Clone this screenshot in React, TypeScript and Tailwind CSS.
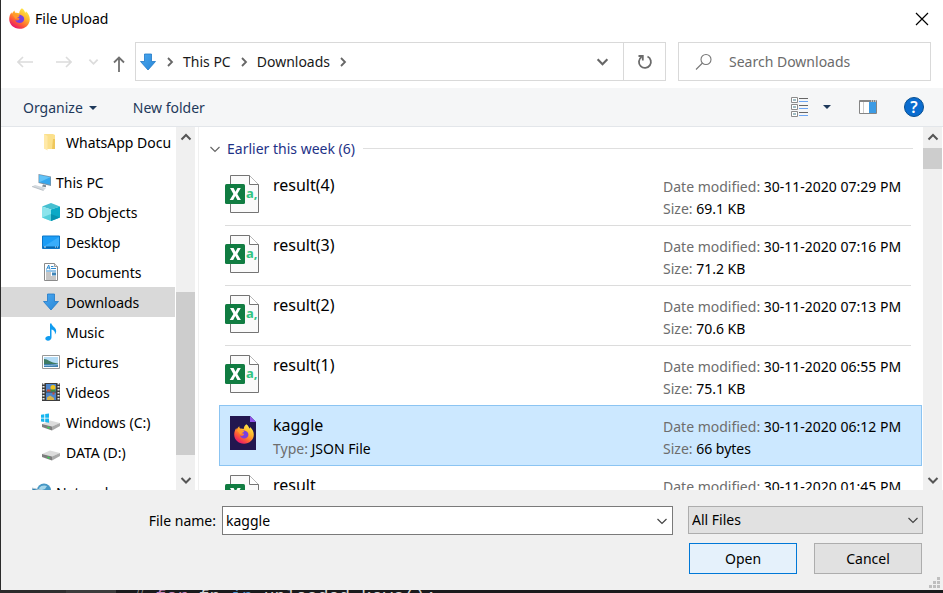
import React from "react";

const DownArrow = () => (
  <svg viewBox="0 0 18 18" className="size-[18px] shrink-0" aria-hidden="true">
    <defs>
      <linearGradient id="dl" x1="0" y1="0" x2="1" y2="1">
        <stop offset="0" stopColor="#4aa8f0" />
        <stop offset="1" stopColor="#2886d6" />
      </linearGradient>
    </defs>
    <path d="M5.5 1h7v7.5h4L9 17 1.500 8.500h4z" fill="url(#dl)" stroke="#1f78c8" strokeWidth="0.8" />
  </svg>
);

const Firefox = ({ className }: { className: string }) => (
  <svg viewBox="0 0 20 20" className={className} aria-hidden="true">
    <defs>
      <linearGradient id="ff" x1="0.85" y1="0.05" x2="0.25" y2="0.95">
        <stop offset="0" stopColor="#fff04a" />
        <stop offset="0.4" stopColor="#ffb02a" />
        <stop offset="0.7" stopColor="#ff5f35" />
        <stop offset="1" stopColor="#e8156c" />
      </linearGradient>
    </defs>
    <path d="M12.300 0.300c2 1.400 2.700 2.900 3 4.200.7-.3.800-1 .800-1.500 2.400 2 3.700 4.800 3.700 7.600 0 5.200-4.300 9.200-9.800 9.200S.2 15.700.2 10.500c0-2.500.9-4.900 2.200-6.500 0 .7.200 1.200.5 1.500C3.300 4.300 4.200 3 5.300 2.300c-.1.900.2 1.600.7 2.200 1.800-.2 2.800.1 3.700.600C9.800 3.200 10.800 1.400 12.300.3z" fill="url(#ff)" />
    <path d="M6.200 8.600c1.200-1.700 3.200-2.500 5-1.900 2.300.6 3.500 2.400 3.200 4.300-.3 2.100-2.100 3.400-4.200 3.400-2 0-3.800-1.100-4.200-2.900 1.300.7 2.700.5 3.600-.5.800-.8.300-1.400-.6-1.500z" fill="#7a3fe0" />
    <path d="M3 6.200c1.300-.9 3.200-.8 4.500.1 1 .6 1.900.6 2.700.8-.2 1-1.200 1.500-2.100 1.900-.7.400-.5 1.300-1.700 1.500z" fill="#ff9a2b" />
  </svg>
);

type ChevronProps = { dir: "up" | "down" | "right"; className: string; weight?: number };
const chevronPaths = { up: "M1.500 7.500 6 3l4.500 4.500", down: "M1.500 4 6 8.500 10.500 4", right: "M4 2l4 4-4 4" };
const Chevron = ({ dir, className, weight = 1.5 }: ChevronProps) => (
  <svg viewBox="0 0 12 12" className={className} fill="none" stroke="currentColor" strokeWidth={weight} aria-hidden="true">
    <path d={chevronPaths[dir]} />
  </svg>
);

const Folder = () => (
  <svg viewBox="0 0 18 18" className="size-[18px]" aria-hidden="true">
    <path d="M2 1h9l2 1v14H3l-1-1z" fill="#fbe08c" />
    <path d="M11 6h2v10h-3z" fill="#efc75c" />
    <path d="M2 1l3.500 2v14.500L2 15.500z" fill="#ffe9a8" />
  </svg>
);
const Computer = () => (
  <svg viewBox="0 0 20 18" className="h-[18px] w-5" aria-hidden="true">
    <path d="M6.500 1 19 3.500V13L6.500 10z" fill="#7d93a5" />
    <path d="M7.300 2l11 2.200v7.600l-11-2.500z" fill="#35a7ee" />
    <path d="M7.300 2l11 2.200-11 5z" fill="#62c3f7" />
    <path d="M11 11.500l3 .7v2l-4-.7z" fill="#7d8b96" />
    <path d="M0 13.500l3-1.500 11 3-2.500 2.500z" fill="#d3d9de" />
    <path d="M0 13.500 11.500 17.500" stroke="#a6afb6" strokeWidth="0.7" />
  </svg>
);
const Cube = () => (
  <svg viewBox="0 0 18 18" className="size-[18px]" aria-hidden="true">
    <path d="M9 0l9 3.500L9 6.500 0 3.500z" fill="#46bfd0" />
    <path d="M0 3.500l9 3V18l-9-3.500z" fill="#8be4ec" />
    <path d="M18 3.500l-9 3V18l9-3.500z" fill="#0aa9c6" />
    <path d="M0 14.500 9 11v7z" fill="#55cfdb" />
    <path d="M18 14.500 9 11v7z" fill="#0692af" />
  </svg>
);
const Desktop = () => (
  <svg viewBox="0 0 18 18" className="size-[18px]" aria-hidden="true">
    <path d="M.5 3h17v12.500H.5z" fill="#1c9df5" stroke="#0b77c9" />
    <path d="M1 14 17 4v9.500H1z" fill="#39adfb" />
    <path d="M1 13.500h16V15H1z" fill="#0a67ad" />
    <path d="M2 14h2m9 0h1m1 0h1" stroke="#fff" strokeWidth="0.800" />
  </svg>
);
const Documents = () => (
  <svg viewBox="0 0 18 18" className="size-[18px]" aria-hidden="true">
    <path d="M2.500.5h10l3 3v14h-13z" fill="#fff" stroke="#8a8a8a" />
    <path d="M12.500.5v3h3" fill="#ddd" stroke="#8a8a8a" strokeWidth="0.8" />
    <path d="M4.500 6.500 6.700 2l1.300 4.500M5.500 5h2M9 3.500h2.500M9 5.500h5M4 8h10" stroke="#2b8ad0" fill="none" />
    <path d="M4 10h5m-5 2h5m-5 2h10M4 16h10" stroke="#8d8d8d" />
    <path d="M10 9.500h4v3h-4z" fill="#3f85b8" />
  </svg>
);
const Music = () => (
  <svg viewBox="0 0 18 18" className="size-[18px]" aria-hidden="true">
    <path d="M8 .5h1.500c.3 2.800 4.700 4 4.700 7.500 0 1.500-.7 2.800-1.300 3.500.6-2.800-1-4.500-3.400-5v8c0 2-1.700 3.200-3.500 3.200-1.500 0-2.700-.8-2.700-2.100C3.300 14 5 13 6.700 13c.5 0 .9 0 1.300.2z" fill="#109cf0" />
  </svg>
);
const Pictures = () => (
  <svg viewBox="0 0 18 18" className="size-[18px]" aria-hidden="true">
    <path d="M.5 2.500h17v13H.5z" fill="#fff" stroke="#989898" />
    <path d="M2 4h14v10H2z" fill="#b4dcf6" />
    <path d="M2 6c4 0 6 3.500 14 4.500V12H2z" fill="#3e7a63" />
    <path d="M2 11h14v3H2z" fill="#3e7fae" />
    <path d="M2 12.500c4 .2 8 0 14-1" stroke="#90bddb" fill="none" />
  </svg>
);
const Videos = () => (
  <svg viewBox="0 0 18 18" className="size-[18px]" aria-hidden="true">
    <path d="M0 0h18v18H0z" fill="#3c3c3c" />
    <path d="M1.500 0v18M16.500 0v18" stroke="#eee" strokeWidth="2" strokeDasharray="1.500 1.500" />
    <path d="M4 1h10v7.500H4zM4 9.500h10V17H4z" fill="#4e86cc" />
    <circle cx="11" cy="4.500" r="2.500" fill="#efc11d" />
    <path d="M5 6.500h4v2H5zM10.500 9.500h2v2h-2z" fill="#d04a2c" />
    <path d="M8.500 6.500h5v2h-5z" fill="#3e8e3a" />
    <path d="M5 14.500l3-2 4 2.500v2H5z" fill="#d9b44c" />
  </svg>
);
const Drive = ({ system = false }: { system?: boolean }) => (
  <svg viewBox="0 0 20 18" className="-ml-0.5 h-[18px] w-5" aria-hidden="true">
    <path d="M2 11 10 7.500l10 2.500-8 3.500z" fill="#dcdcdc" />
    <path d="M2 11l10 2.500V17.500L2 14z" fill="#7d7d7d" />
    <path d="M12 13.500l8-3.500v3l-8 4.500z" fill="#a9a9a9" />
    <path d="M7.500 14.300l2 .7" stroke="#39d353" strokeWidth="1.500" />
    {system && <path d="M1 1.800 4.300 1.200v3.500H1zM5.200 1 9 .4v4.300H5.200zM1 5.500h3.300V9L1 8.500zM5.200 5.500H9v4.200l-3.800-.6z" fill="#16b5ef" />}
  </svg>
);
const Network = () => (
  <svg viewBox="0 0 20 18" className="h-[18px] w-5" aria-hidden="true">
    <circle cx="12" cy="7.500" r="7" fill="#4697c4" />
    <path d="M7 5c2-3 6-3 8-2l-2 3-3 1-1 3z" fill="#a5d6ea" />
    <path d="M0 5l9 2v6l-9-2z" fill="#2f83b4" stroke="#b9cbd6" />
  </svg>
);

const SpreadsheetIcon = () => (
  <svg viewBox="0 0 35 39" className="h-[39px] w-[35px] shrink-0" aria-hidden="true">
    <path d="M5.500.5h19l9 9v28h-28z" fill="#fafafa" stroke="#747474" />
    <path d="M24.500.5v9h9" fill="#fff" stroke="#747474" />
    <rect y="9" width="20" height="20" rx="1.500" fill="#107c41" />
    <path d="M5 13h3.600l1.900 3.700 2-3.700h3.300l-3.500 5.900 3.600 6.100h-3.500l-2.100-3.900-2.100 3.900H4.700l3.700-6z" fill="#fff" />
    <text x="21" y="23" fontSize="13" fontWeight="700" fill="#33c481" fontFamily="Noto Sans, sans-serif">a,</text>
  </svg>
);
const JsonIcon = () => (
  <span className="relative ml-[5px] mt-px flex h-[35px] w-[27px] shrink-0 items-center justify-center">
    <svg viewBox="0 0 27 35" className="absolute inset-0 h-full w-full" aria-hidden="true">
      <path d="M0 0h20l6 6v28H0z" fill="#22164f" />
      <path d="M20 0l6 6h-6z" fill="#8f52e8" />
    </svg>
    <Firefox className="relative size-5" />
  </span>
);

type Place = { name: string; icon: React.ReactNode; root?: boolean; active?: boolean };
const places: Place[] = [
  { name: "WhatsApp Docu", icon: <Folder /> },
  { name: "This PC", icon: <Computer />, root: true },
  { name: "3D Objects", icon: <Cube /> },
  { name: "Desktop", icon: <Desktop /> },
  { name: "Documents", icon: <Documents /> },
  { name: "Downloads", icon: <DownArrow />, active: true },
  { name: "Music", icon: <Music /> },
  { name: "Pictures", icon: <Pictures /> },
  { name: "Videos", icon: <Videos /> },
  { name: "Windows (C:)", icon: <Drive system /> },
  { name: "DATA (D:)", icon: <Drive /> },
  { name: "Network", icon: <Network />, root: true },
];

type FileItem = { name: string; date: string; size: string; kind?: string };
const files: FileItem[] = [
  { name: "result(4)", date: "30-11-2020 07:29 PM", size: "69.1 KB" },
  { name: "result(3)", date: "30-11-2020 07:16 PM", size: "71.2 KB" },
  { name: "result(2)", date: "30-11-2020 07:13 PM", size: "70.6 KB" },
  { name: "result(1)", date: "30-11-2020 06:55 PM", size: "75.1 KB" },
  { name: "kaggle", date: "30-11-2020 06:12 PM", size: "66 bytes", kind: "JSON File" },
  { name: "result", date: "30-11-2020 01:45 PM", size: "" },
];

const ScrollBar = ({ children }: { children: React.ReactNode }) => (
  <div className="flex w-[19px] shrink-0 flex-col bg-[#f0f0f0] text-[#555]">
    <button aria-label="Scroll up" className="flex h-[21px] shrink-0 items-center justify-center">
      <Chevron dir="up" className="size-3" weight={2} />
    </button>
    <div className="flex min-h-0 flex-1 flex-col">{children}</div>
    <button aria-label="Scroll down" className="flex h-[21px] shrink-0 items-center justify-center">
      <Chevron dir="down" className="size-3" weight={2} />
    </button>
  </div>
);

const Row = ({ file }: { file: FileItem }) => {
  const selected = file.kind !== undefined;
  return (
    <li
      aria-current={selected ? "true" : undefined}
      className={
        selected
          ? "-mt-px box-border h-[61px] border border-[#8bc4f2] bg-[#cce8ff] pl-[5px] pr-2.5"
          : "h-[60px] pl-1.5 pr-[11px]"
      }
    >
      <div className={selected ? "flex h-full" : "flex h-full border-b border-[#dcdcdc]"}>
        <div className="flex w-[48px] shrink-0 pt-[9px]">{selected ? <JsonIcon /> : <SpreadsheetIcon />}</div>
        <div className="min-w-0 flex-1 pt-2">
          <div className="text-base leading-[22px]">{file.name}</div>
          {file.kind && (
            <div className="mt-0.5 leading-[22px]">
              <span className="text-[#6d6d6d]">Type: </span>
              {file.kind}
            </div>
          )}
        </div>
        <div className="w-[248px] shrink-0 whitespace-nowrap pt-2.5 leading-[22px]">
          <div><span className="text-[#6d6d6d]">Date modified: </span>{file.date}</div>
          {file.size && <div><span className="text-[#6d6d6d]">Size: </span>{file.size}</div>}
        </div>
      </div>
    </li>
  );
};

export default function App() {
  return (
    <div className="flex h-screen flex-col overflow-hidden bg-[#1a1a1c] font-['Noto_Sans','Open_Sans',sans-serif] text-sm text-black">
      <div className="flex min-h-0 flex-1 flex-col border-l border-[#2b2b2b] bg-white">
        <header className="flex h-[37px] shrink-0 items-center pl-2 pr-3.5">
          <Firefox className="size-[21px]" />
          <h1 className="ml-[5px]">File Upload</h1>
          <button aria-label="Close" className="ml-auto">
            <svg viewBox="0 0 14 14" className="size-3.5" stroke="#000" strokeWidth="1.200" aria-hidden="true"><path d="M1 1l12 12M13 1 1 13" /></svg>
          </button>
        </header>

        <nav className="mt-[5px] flex h-[39px] shrink-0 items-center pr-3" aria-label="Location">
          <div className="flex w-[134px] shrink-0 items-center text-[#dcdcdc]">
            <button aria-label="Back" className="ml-4">
              <svg viewBox="0 0 16 12" className="h-3 w-4" fill="none" stroke="currentColor" strokeWidth="1.600" aria-hidden="true"><path d="M16 6H1.500M6 1 1 6l5 5" /></svg>
            </button>
            <button aria-label="Forward" className="ml-[23px]">
              <svg viewBox="0 0 16 12" className="h-3 w-4" fill="none" stroke="currentColor" strokeWidth="1.600" aria-hidden="true"><path d="M0 6h14.500M10 1l5 5-5 5" /></svg>
            </button>
            <button aria-label="Recent locations" className="ml-4"><Chevron dir="down" className="size-[11px]" weight={2} /></button>
            <button aria-label="Up" className="ml-[13px] mt-1 text-[#707070]">
              <svg viewBox="0 0 14 16" className="h-4 w-3.5" fill="none" stroke="currentColor" strokeWidth="1.800" aria-hidden="true"><path d="M7 16V1.500M2 6.500 7 1.500l5 5" /></svg>
            </button>
          </div>
          <div className="flex h-full min-w-0 flex-1 items-center border border-[#d9d9d9] pl-[3px] text-[#191919]">
            <DownArrow />
            <Chevron dir="right" className="ml-[7px] size-3 text-[#666]" weight={1.8} />
            <button className="ml-[7px]">This PC</button>
            <Chevron dir="right" className="ml-[7px] size-3 text-[#666]" weight={1.8} />
            <button className="ml-[7px]">Downloads</button>
            <Chevron dir="right" className="ml-[7px] size-3 text-[#666]" weight={1.8} />
            <button aria-label="Previous locations" className="ml-auto mr-3.5 text-[#666]"><Chevron dir="down" className="size-[13px]" weight={2} /></button>
            <button aria-label="Refresh" className="flex h-full w-[42px] items-center justify-center border-l border-[#d9d9d9]">
              <svg viewBox="0 0 16 16" className="size-4" fill="none" stroke="#6b6b6b" strokeWidth="1.800" aria-hidden="true"><path d="M10.500 2.500a6 6 0 1 1-6 .5M1.500 2h4.300v4.500" /></svg>
            </button>
          </div>
          <label className="ml-3 flex h-full w-[253px] shrink-0 items-center border border-[#d9d9d9] pl-4">
            <svg viewBox="0 0 18 18" className="size-[18px] shrink-0" fill="none" stroke="#777" strokeWidth="1.100" aria-hidden="true"><circle cx="11" cy="6.500" r="5" /><path d="M7.500 10 1 16.500" /></svg>
            <input type="search" aria-label="Search Downloads" placeholder="Search Downloads" className="ml-4 w-full min-w-0 bg-transparent outline-none placeholder:text-[#6b6b6b]" />
          </label>
        </nav>

        <div className="mt-[7px] flex h-[39px] shrink-0 items-center border-b border-[#e3e6ea] bg-[#f5f6f7] pl-[22px] pr-[19px] text-[#1e395b]">
          <button className="flex items-center gap-1.5 pt-0.5">
            Organize
            <svg viewBox="0 0 8 4" className="h-1 w-2" fill="#1e395b" aria-hidden="true"><path d="M0 0h8L4 4z" /></svg>
          </button>
          <button className="ml-9 pt-0.5">New folder</button>
          <button aria-label="Change your view" className="ml-auto">
            <svg viewBox="0 0 18 20" className="h-5 w-[18px]" fill="#fff" stroke="#8b8b8b" aria-hidden="true">
              <path d="M.5.5h6v5h-6zM.5 7.500h6v5h-6zM.5 14.500h6v5h-6z" />
              <path d="M8 1.500h9M8 8.500h9M8 15.500h9" stroke="#666" />
              <path d="M8 4.500h9M8 11.500h9M8 18.500h9" stroke="#6ba5f5" />
              <path d="M2 3h3m-3 7h3m-3 7h3" stroke="#427b89" />
            </svg>
          </button>
          <button aria-label="More view options" className="ml-3.5">
            <svg viewBox="0 0 8 4" className="h-1 w-2" fill="#1e395b" aria-hidden="true"><path d="M0 0h8L4 4z" /></svg>
          </button>
          <button aria-label="Show the preview pane" className="ml-7">
            <svg viewBox="0 0 18 14" className="h-3.5 w-[18px]" aria-hidden="true">
              <path d="M.5.5h17v13H.5z" fill="#fff" stroke="#858585" />
              <path d="M1 1.500h16" stroke="#858585" />
              <path d="M4.500 2v11" stroke="#ccc" />
              <path d="M10 2h7v11h-7z" fill="#3c9be4" />
              <path d="M12 1h1m1 0h1m1 0h1" stroke="#fff" />
            </svg>
          </button>
          <button aria-label="Get help" className="ml-[27px] flex size-5 items-center justify-center rounded-full border border-[#074f91] bg-[#0a6ccf] text-base font-semibold text-white">?</button>
        </div>

        <div className="flex min-h-0 flex-1">
          <aside className="flex w-[198px] shrink-0 border-r border-[#f0f0f0]">
            <ul className="w-[175px] shrink-0 overflow-hidden pr-px">
              {places.map((p) => (
                <li key={p.name} className={p.root ? "mt-2.5" : ""}>
                  <button
                    className={
                      (p.root ? "gap-1 pl-[31px] " : "gap-1.5 pl-[41px] ") +
                      (p.active ? "bg-[#d9d9d9] " : "") +
                      "flex h-[30px] w-full items-center overflow-hidden whitespace-nowrap"
                    }
                  >
                    <span className={p.root ? "w-5 shrink-0" : "w-[18px] shrink-0"}>{p.icon}</span>
                    <span className="pt-0.5">{p.name}</span>
                  </button>
                </li>
              ))}
            </ul>
            <ScrollBar>
              <div className="flex-[144]" />
              <div className="flex-[163] bg-[#cdcdcd]" />
              <div className="flex-[14]" />
            </ScrollBar>
          </aside>

          <main className="min-w-0 flex-1 overflow-hidden pl-5 pr-px">
            <h2 className="flex h-[39px] items-center pb-0 pt-1 text-[#1e3287]">
              <button className="-ml-2.5 flex items-center gap-1.5">
                <Chevron dir="down" className="size-3 text-[#666]" weight={1.2} />
                Earlier this week (6)
              </button>
              <span className="ml-2 mr-[9px] h-px flex-1 bg-[#dfdfdf]" />
            </h2>
            <ul>
              {files.map((f) => <Row key={f.name} file={f} />)}
            </ul>
          </main>
          <div className="mr-px flex">
            <ScrollBar>
              <div className="h-[21px] bg-[#cdcdcd]" />
            </ScrollBar>
          </div>
        </div>

        <footer className="relative shrink-0 bg-[#f0f0f0] pb-4 pr-5 pt-4">
          <div className="flex items-start">
            <label htmlFor="filename" className="w-[221px] shrink-0 pr-1.5 text-right leading-[29px]">File name:</label>
            <div className="flex h-[29px] min-w-0 flex-1 items-center border border-[#7a7a7a] bg-white">
              <input id="filename" defaultValue="kaggle" className="min-w-0 flex-1 bg-transparent pl-[3px] outline-none" />
              <button aria-label="File name history" className="mr-1 text-[#444]"><Chevron dir="down" className="size-3" weight={1.2} /></button>
            </div>
            <div className="relative ml-[15px] w-[235px] shrink-0">
              <select aria-label="File type" className="block h-7 w-full appearance-none border border-[#adadad] bg-[#e1e1e1] pl-[3px] outline-none">
                <option>All Files</option>
              </select>
              <Chevron dir="down" className="pointer-events-none absolute right-1 top-2 size-3 text-[#444]" weight={1.2} />
            </div>
          </div>
          <div className="mt-2 flex justify-end gap-[17px] pr-px">
            <button className="h-[31px] w-[108px] border border-[#0078d7] bg-[#e5f1fb]">Open</button>
            <button className="h-[31px] w-[108px] border border-[#adadad] bg-[#e1e1e1]">Cancel</button>
          </div>
          <svg viewBox="0 0 11 11" className="absolute bottom-0.5 right-[3px] size-[11px]" fill="#bfbfbf" aria-hidden="true">
            <path d="M8 0h3v3H8zM4 4h3v3H4zM8 4h3v3H8zM0 8h3v3H0zM4 8h3v3H4zM8 8h3v3H8z" />
          </svg>
        </footer>
      </div>

      <div className="flex h-[3px] shrink-0 overflow-hidden">
        <div className="w-10 bg-[#2b2b2b]" />
        <div className="w-[26px] bg-[#2f2f2f]" />
        <div className="w-[50px] bg-[#3c3c3c]" />
        <code className="whitespace-pre pl-[18px] font-['Liberation_Mono',monospace] text-lg leading-[14px] text-[#d4d4d4]">
          <span className="text-[#888]"># </span><span className="text-[#c586c0]">for</span> fn <span className="text-[#569cd6]">in</span> uploaded.keys():
        </code>
      </div>
    </div>
  );
}
